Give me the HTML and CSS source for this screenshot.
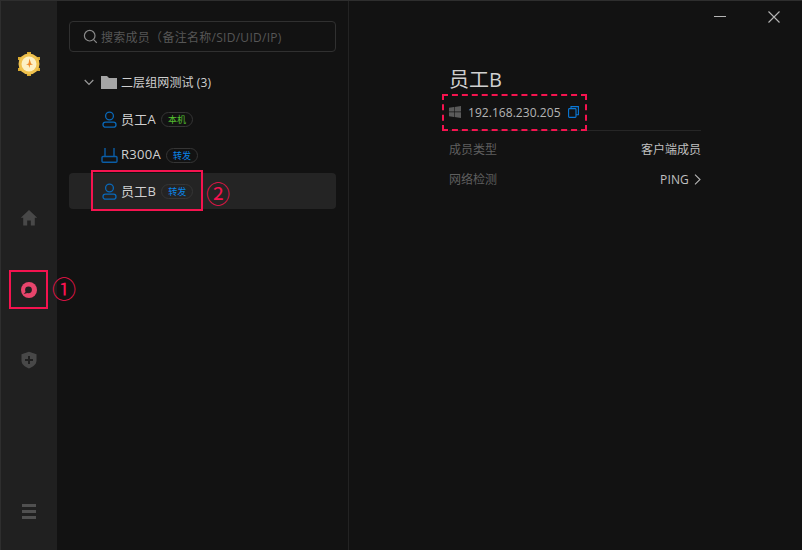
FILE: index.html
```html
<!DOCTYPE html>
<html lang="zh">
<head>
<meta charset="utf-8">
<title>成员</title>
<link rel="stylesheet" href="styles.css">
</head>
<body>
<div class="app">
  <aside class="rail">
    <svg class="logo" width="26" height="26" viewBox="0 0 26 26">
      <g fill="#d9a92f"><rect x="11" y="1" width="4" height="3"/><rect x="11" y="22" width="4" height="3"/><rect x="2" y="6" width="3" height="3"/><rect x="21" y="6" width="3" height="3"/><rect x="2" y="17" width="3" height="3"/><rect x="21" y="17" width="3" height="3"/></g>
      <circle cx="13" cy="13" r="10.5" fill="#f0c24f"/>
      <circle cx="13" cy="13" r="7.5" fill="#fdf0c4"/>
      <path d="M13.5 7.5l1.5 5 2 1-3 .5-.5 3-1-3-2.500-.5 2.500-1z" fill="#ee8a2c"/>
    </svg>
    <nav class="rail-nav">
      <svg class="rail-icon" width="18" height="18" viewBox="0 0 18 18"><path d="M9 1L.8 8.800h2.400V16.500h4v-5h3.600v5h4V8.800h2.400z" fill="#484848"/></svg>
      <svg class="rail-icon" width="18" height="18" viewBox="0 0 18 18"><circle cx="9" cy="10" r="8" fill="#e8456c"/><circle cx="8.500" cy="9.800" r="3.400" fill="#202020"/><path d="M6 11.500L3.600 14 7.500 13z" fill="#202020"/></svg>
      <svg class="rail-icon" width="18" height="18" viewBox="0 0 18 18"><path fill-rule="evenodd" d="M9 .8l7.500 2.400v6.300c0 3.800-3.300 6.500-7.500 7.900-4.200-1.400-7.500-4.100-7.500-7.900V3.200zM8 5v3H5v2h3v3h2v-3h3V8h-3V5z" fill="#484848"/></svg>
    </nav>
    <div class="rail-menu"><span></span><span></span><span></span></div>
  </aside>

  <section class="list-pane">
    <div class="search">
      <svg width="15" height="15" viewBox="0 0 15 15" fill="none" stroke="#8a8a8a" stroke-width="1.200"><circle cx="6.700" cy="6.700" r="5.300"/><path d="M10.600 10.600l3.200 3.200"/></svg>
      <span>搜索成员（备注名称/SID/UID/IP)</span>
    </div>
    <div class="group">
      <svg width="10" height="7" viewBox="0 0 10 7" fill="none" stroke="#9a9a9a" stroke-width="1.200"><path d="M.7 1l4.300 4.500L9.300 1"/></svg>
      <svg width="16" height="13" viewBox="0 0 16 13"><path d="M0 0h6l2 2h8v11H0z" fill="#a5a5a5"/></svg>
      <span class="group-name">二层组网测试 (3)</span>
    </div>
    <ul class="members">
      <li class="member">
        <svg class="m-icon" width="15" height="17" viewBox="0 0 15 17" fill="none" stroke="#0a68b8" stroke-width="1.300"><circle cx="7.500" cy="5" r="3.900"/><rect x="1" y="11.200" width="13" height="5" rx="2.500"/></svg>
        <span class="m-name">员工A</span><span class="tag tag-green">本机</span>
      </li>
      <li class="member">
        <svg class="m-icon" width="17" height="16" viewBox="0 0 17 16" fill="none" stroke="#0a5da6" stroke-width="1.400"><rect x="1" y="9.500" width="15" height="5.800" rx="1"/><path d="M4 9.500V1M13 9.500V1"/></svg>
        <span class="m-name">R300A</span><span class="tag tag-blue">转发</span>
      </li>
      <li class="member active">
        <svg class="m-icon" width="15" height="17" viewBox="0 0 15 17" fill="none" stroke="#0a68b8" stroke-width="1.300"><circle cx="7.500" cy="5" r="3.900"/><rect x="1" y="11.200" width="13" height="5" rx="2.500"/></svg>
        <span class="m-name">员工B</span><span class="tag tag-blue">转发</span>
      </li>
    </ul>
  </section>

  <main class="detail">
    <div class="win-controls">
      <span class="win-min"></span>
      <svg width="12" height="12" viewBox="0 0 12 12" stroke="#b5b5b5" stroke-width="1.100"><path d="M.5.500l11 11M11.500.500l-11 11"/></svg>
    </div>
    <div class="info">
      <h1 class="title">员工B</h1>
      <div class="ip-row">
        <svg width="12" height="12" viewBox="0 0 12 12" fill="#5a5a5a"><path d="M0 1.700l5-.7v4.600H0zM5.600.900L12 0v5.600H5.600zM0 6.200h5v4.700l-5-.7zM5.600 6.200H12V12l-6.400-.9z"/></svg>
        <span class="ip">192.168.230.205</span>
        <svg width="11" height="12" viewBox="0 0 11 12" fill="none" stroke="#0b78d6" stroke-width="1.100"><rect x=".6" y="2.600" width="7.400" height="8.800" rx=".8"/><path d="M3 2.600V.6h7.400v8.200H8"/></svg>
      </div>
      <div class="row"><span class="label">成员类型</span><span class="value">客户端成员</span></div>
      <div class="row"><span class="label">网络检测</span><span class="value value-link">PING
        <svg width="7" height="11" viewBox="0 0 7 11" fill="none" stroke="#b5b5b5" stroke-width="1.100"><path d="M1 .6l5 4.900-5 4.900"/></svg></span></div>
    </div>
  </main>

  <div class="mark mark-nav"></div>
  <div class="mark mark-member"></div>
  <div class="mark-dashed"></div>
  <span class="num num-1">①</span>
  <span class="num num-2">②</span>
</div>
</body>
</html>
```

FILE: styles.css
```css
* { box-sizing: border-box; }
html, body { margin: 0; height: 100%; }
body { background: #121212; font-family: "Open Sans", "Noto Sans CJK SC", sans-serif; overflow: hidden; }
ul { list-style: none; margin: 0; padding: 0; }

.app { position: relative; display: flex; width: 802px; height: 550px; background: #121212; border-top: 1px solid #2e2e2e; border-left: 1px solid #2e2e2e; }

.rail { display: flex; flex-direction: column; align-items: center; width: 56px; flex: none; background: #202020; padding: 50px 0 31px; }
.logo { display: block; }
.rail-nav { display: flex; flex-direction: column; align-items: center; gap: 53px; margin-top: 132px; }
.rail-icon { display: block; }
.rail-menu { display: flex; flex-direction: column; gap: 3px; margin-top: auto; }
.rail-menu span { display: block; width: 14px; height: 3px; background: #505050; }

.list-pane { width: 292px; flex: none; padding: 20px 12px 0; border-right: 1px solid #232323; }
.search { display: flex; align-items: center; gap: 3px; height: 31px; padding-left: 13px; border: 1px solid #303030; border-radius: 4px; font-size: 12px; letter-spacing: .28px; color: #565656; white-space: nowrap; }
.group { display: flex; align-items: center; height: 20px; margin-top: 20px; padding-left: 15px; }
.group svg:nth-child(2) { margin-left: 7px; }
.group-name { margin-left: 4px; padding-bottom: 1px; font-size: 12px; letter-spacing: .1px; color: #d0d0d0; }

.members { margin-top: 9px; }
.member { display: flex; align-items: center; height: 36px; padding-left: 32px; border-radius: 4px; }
.active { background: #242424; }
.m-icon { flex: none; width: 17px; }
.m-name { margin-left: 3px; padding-bottom: 2px; font-size: 13px; letter-spacing: .3px; color: #d0d0d0; }
.tag { display: inline-flex; align-items: center; justify-content: center; height: 15px; width: 32px; margin-left: 5px; border: 1px solid #353535; border-radius: 8px; font-size: 9px; }
.tag-green { color: #55c030; }
.tag-blue { color: #0a84e8; }

.detail { position: relative; flex: 1; }
.win-controls { display: flex; align-items: center; justify-content: flex-end; gap: 42px; height: 31px; padding-right: 22px; }
.win-min { display: block; width: 12px; height: 1px; background: #b5b5b5; }
.win-controls svg { display: block; }
.info { width: 252px; margin: 34px 0 0 100px; }
.title { margin: 0; font-size: 20px; font-weight: 400; line-height: 28px; color: #d0d0d0; }
.ip-row { display: flex; align-items: center; height: 37px; border-bottom: 1px solid #262626; }
.ip { margin: 0 7px 0 7px; font-size: 12px; letter-spacing: .05px; color: #b5b5b5; }
.row { display: flex; justify-content: space-between; align-items: center; height: 30px; font-size: 12px; }
.ip-row + .row { margin-top: 3px; }
.label { color: #5f5f5f; }
.value { display: flex; align-items: center; gap: 5px; color: #c0c0c0; }
.value-link { letter-spacing: .15px; }

.mark { position: absolute; border: 2px solid #f5134f; }
.mark-nav { left: 8px; top: 269px; width: 39px; height: 39px; }
.mark-member { left: 90px; top: 169px; width: 112px; height: 41px; }
.mark-dashed { position: absolute; left: 441px; top: 93px; width: 145px; height: 37px; border: 2px dashed #f5134f; }
.num { position: absolute; font-family: "Noto Sans CJK SC", sans-serif; font-size: 24px; line-height: 26px; color: #f5134f; }
.num-1 { left: 51px; top: 274px; }
.num-2 { left: 205px; top: 179px; }
```
